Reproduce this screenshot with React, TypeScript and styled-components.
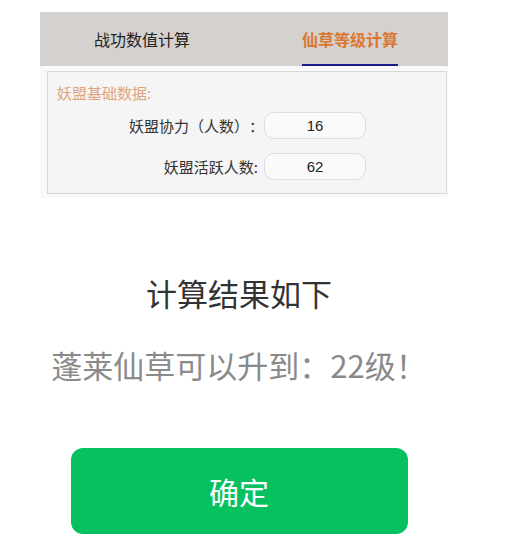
import React from "react";
import styled, { createGlobalStyle } from "styled-components";

const Global = createGlobalStyle`
  html, body { margin: 0; padding: 0; background: #ffffff; }
  body {
    font-family: "Noto Sans CJK SC", "Noto Sans", sans-serif;
    text-spacing-trim: space-all;
  }
  * { box-sizing: border-box; }
`;

const Page = styled.div`
  width: 512px;
  padding-top: 12px;
`;

const Card = styled.div`
  margin-left: 40px;
  width: 408px;
  background: #f9f9f9;
  padding-bottom: 4px;
`;

const Tabs = styled.div`
  display: grid;
  grid-template-columns: 1fr 1fr;
  height: 54px;
  background: #d5d1cf;
`;

const Tab = styled.div`
  display: flex;
  justify-content: center;
  align-items: stretch;
`;

const TabLabel = styled.span<{ $active?: boolean }>`
  display: flex;
  align-items: center;
  font-size: 16px;
  font-weight: ${(p) => (p.$active ? 700 : 400)};
  color: ${(p) => (p.$active ? "#d9772f" : "#222222")};
  border-bottom: 2px solid ${(p) => (p.$active ? "#1a1a8a" : "transparent")};
  padding-top: 2px;
  margin-left: ${(p) => (p.$active ? "8px" : "0")};
`;

const Panel = styled.div`
  margin: 5px 1px 0 7px;
  border: 1px solid #d8d8d8;
  background: #f5f5f5;
  padding: 11px 10px 13px 9px;
`;

const PanelTitle = styled.div`
  font-size: 15px;
  line-height: 20px;
  color: #e3a37a;
`;

const Rows = styled.div`
  display: grid;
  grid-template-columns: 207px 102px;
  column-gap: 0px;
  row-gap: 14px;
  align-items: center;
  margin-top: 9px;
`;

const RowLabel = styled.div<{ $tight?: boolean }>`
  text-align: right;
  font-size: 15px;
  color: #333333;
  padding-right: ${(p) => (p.$tight ? "0" : "6px")};
`;

const Field = styled.div`
  height: 27px;
  border: 1px solid #dcdcdc;
  border-radius: 10px;
  background: #fafafa;
  display: flex;
  align-items: center;
  justify-content: center;
  font-family: "Liberation Sans", Arial, sans-serif;
  font-size: 15px;
  color: #222222;
`;

const Result = styled.div`
  width: 478px;
  display: flex;
  flex-direction: column;
  align-items: center;
`;

const ResultTitle = styled.div`
  margin-top: 75px;
  font-size: 31px;
  line-height: 40px;
  color: #333333;
`;

const ResultLine = styled.div`
  margin-top: 32px;
  font-size: 31px;
  line-height: 40px;
  color: #8a8a8a;
`;

const ConfirmButton = styled.button`
  margin-top: 63px;
  width: 337px;
  height: 86px;
  border: none;
  border-radius: 12px;
  background: #07c160;
  color: #ffffff;
  font-family: "Noto Sans CJK SC", sans-serif;
  font-size: 30px;
  font-weight: 400;
  cursor: pointer;
`;

export default function App() {
  return (
    <Page>
      <Global />
      <Card>
        <Tabs>
          <Tab>
            <TabLabel>战功数值计算</TabLabel>
          </Tab>
          <Tab>
            <TabLabel $active>仙草等级计算</TabLabel>
          </Tab>
        </Tabs>
        <Panel>
          <PanelTitle>妖盟基础数据:</PanelTitle>
          <Rows>
            <RowLabel $tight>妖盟协力（人数）：</RowLabel>
            <Field>16</Field>
            <RowLabel>妖盟活跃人数:</RowLabel>
            <Field>62</Field>
          </Rows>
        </Panel>
      </Card>
      <Result>
        <ResultTitle>计算结果如下</ResultTitle>
        <ResultLine>蓬莱仙草可以升到：22级！</ResultLine>
        <ConfirmButton>确定</ConfirmButton>
      </Result>
    </Page>
  );
}
